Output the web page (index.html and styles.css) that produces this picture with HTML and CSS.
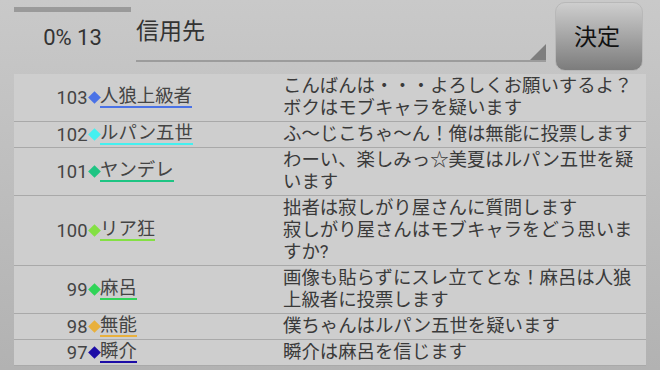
FILE: index.html
```html
<!DOCTYPE html>
<html lang="ja">
<head>
<meta charset="utf-8">
<link rel="stylesheet" href="styles.css">
</head>
<body>
<div class="header">
  <div class="progress">
    <div class="bar"></div>
    <div class="pct">0% 13</div>
  </div>
  <div class="spinner"><span class="spin-text">信用先</span></div>
  <div class="button">決定</div>
</div>
<div class="list">
  <div class="row">
    <div class="num">103<span class="dia c103"></span></div>
    <div class="name"><span class="nm u103">人狼上級者</span></div>
    <div class="msg">こんばんは・・・よろしくお願いするよ？ボクはモブキャラを疑います</div>
  </div>
  <div class="row">
    <div class="num">102<span class="dia c102"></span></div>
    <div class="name"><span class="nm u102">ルパン五世</span></div>
    <div class="msg">ふ〜じこちゃ〜ん！俺は無能に投票します</div>
  </div>
  <div class="row">
    <div class="num">101<span class="dia c101"></span></div>
    <div class="name"><span class="nm u101">ヤンデレ</span></div>
    <div class="msg">わーい、楽しみっ☆美夏はルパン五世を疑います</div>
  </div>
  <div class="row">
    <div class="num">100<span class="dia c100"></span></div>
    <div class="name"><span class="nm u100">リア狂</span></div>
    <div class="msg">拙者は寂しがり屋さんに質問します<br>寂しがり屋さんはモブキャラをどう思いますか?</div>
  </div>
  <div class="row">
    <div class="num">99<span class="dia c99"></span></div>
    <div class="name"><span class="nm u99">麻呂</span></div>
    <div class="msg">画像も貼らずにスレ立てとな！麻呂は人狼上級者に投票します</div>
  </div>
  <div class="row">
    <div class="num">98<span class="dia c98"></span></div>
    <div class="name"><span class="nm u98">無能</span></div>
    <div class="msg">僕ちゃんはルパン五世を疑います</div>
  </div>
  <div class="row">
    <div class="num">97<span class="dia c97"></span></div>
    <div class="name"><span class="nm u97">瞬介</span></div>
    <div class="msg">瞬介は麻呂を信じます</div>
  </div>
</div>
</body>
</html>
```

FILE: styles.css
```css
html, body {
  margin: 0;
  padding: 0;
}
body {
  width: 660px;
  height: 370px;
  overflow: hidden;
  background: linear-gradient(#c9c9c9, #b2b2b2);
  font-family: Roboto, "Noto Sans CJK JP", sans-serif;
  color: #3a3a3a;
}
.header {
  display: flex;
  height: 74px;
  padding: 0 17px 0 14px;
  box-sizing: border-box;
}
.progress {
  width: 117px;
  padding-top: 7px;
}
.bar {
  height: 5px;
  background: #9a9a9a;
}
.pct {
  margin-top: 13px;
  text-align: center;
  font-size: 22px;
  line-height: 26px;
  color: #333;
}
.spinner {
  position: relative;
  margin-left: 5px;
  width: 410px;
  height: 60px;
  border-bottom: 2px solid #9c9c9c;
  box-sizing: content-box;
}
.spin-text {
  display: block;
  padding-top: 17px;
  font-size: 23px;
  line-height: 30px;
  color: #333;
}
.spinner::after {
  content: "";
  position: absolute;
  right: 0;
  bottom: 0;
  width: 0;
  height: 0;
  border-left: 16px solid transparent;
  border-bottom: 16px solid #7e7e7e;
}
.button {
  margin-left: 9px;
  margin-top: 2px;
  width: 88px;
  height: 69px;
  box-sizing: border-box;
  border-radius: 10px;
  border: 1px solid #b8b8b8;
  background: linear-gradient(#cecece, #7c7c7c);
  display: flex;
  align-items: center;
  justify-content: center;
  font-size: 23px;
  color: #111;
  padding-bottom: 3px;
  padding-right: 4px;
}
.list {
  margin: 0 14px;
  background: #cecece;
}
.row {
  display: grid;
  grid-template-columns: 86px 183px 1fr;
  border-bottom: 1px solid #a9a9a9;
  padding: 1px 0 2px;
}
.num {
  display: flex;
  justify-content: flex-end;
  align-items: center;
  font-size: 18.4px;
  color: #444;
}
.dia {
  display: inline-block;
  width: 9px;
  height: 9px;
  margin: 0 1.5px 0 2px;
  transform: rotate(45deg);
}
.name {
  display: flex;
  align-items: center;
}
.nm {
  display: inline-block;
  font-size: 18.4px;
  line-height: 19px;
  padding-bottom: 1px;
  border-bottom: 2px solid;
  color: #444;
}
.msg {
  font-size: 18.4px;
  line-height: 22px;
  color: #3a3a3a;
  padding-right: 6px;
}
.c103 { background: #4a72e6; }
.c102 { background: #44f0f0; }
.c101 { background: #1ec483; }
.c100 { background: #84e044; }
.c99 { background: #30d458; }
.c98 { background: #e8b03c; }
.c97 { background: #1c0ca6; }
.u103 { border-color: #4a72e6; }
.u102 { border-color: #44f0f0; }
.u101 { border-color: #1ec483; }
.u100 { border-color: #84e044; }
.u99 { border-color: #30d458; }
.u98 { border-color: #e8b03c; }
.u97 { border-color: #1c0ca6; }
```
